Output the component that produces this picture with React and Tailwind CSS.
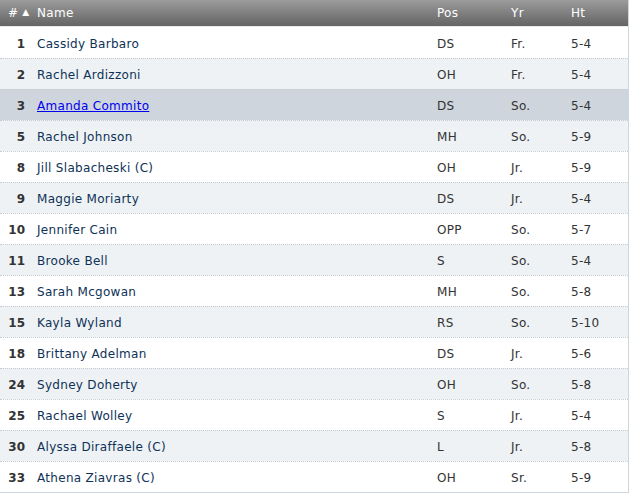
import React from "react";

const players = [
  ["1", "Cassidy Barbaro", "DS", "Fr.", "5-4"],
  ["2", "Rachel Ardizzoni", "OH", "Fr.", "5-4"],
  ["3", "Amanda Commito", "DS", "So.", "5-4"],
  ["5", "Rachel Johnson", "MH", "So.", "5-9"],
  ["8", "Jill Slabacheski (C)", "OH", "Jr.", "5-9"],
  ["9", "Maggie Moriarty", "DS", "Jr.", "5-4"],
  ["10", "Jennifer Cain", "OPP", "So.", "5-7"],
  ["11", "Brooke Bell", "S", "So.", "5-4"],
  ["13", "Sarah Mcgowan", "MH", "So.", "5-8"],
  ["15", "Kayla Wyland", "RS", "So.", "5-10"],
  ["18", "Brittany Adelman", "DS", "Jr.", "5-6"],
  ["24", "Sydney Doherty", "OH", "So.", "5-8"],
  ["25", "Rachael Wolley", "S", "Jr.", "5-4"],
  ["30", "Alyssa Diraffaele (C)", "L", "Jr.", "5-8"],
  ["33", "Athena Ziavras (C)", "OH", "Sr.", "5-9"],
];

export default function App() {
  return (
    <div className="w-[641px] h-[495px] bg-white font-['DejaVu_Sans',sans-serif] text-[12px] tracking-[0.3px]">
      <div className="w-[629px] border-r border-b border-[#cdd5dd]">
        <div className="flex h-[27px] items-center bg-gradient-to-b from-[#9c9c9c] to-[#646464] text-white border-b border-[#e8ecef]">
          <div className="w-[37px] flex items-center pl-[8px] gap-[4px]">
            <span>#</span>
            <span className="text-[9px]">▲</span>
          </div>
          <div className="w-[400px]">Name</div>
          <div className="w-[74px]">Pos</div>
          <div className="w-[60px]">Yr</div>
          <div>Ht</div>
        </div>
        {players.map((p, i) => {
          const active = i === 2;
          const bg = active ? "bg-[#ced5dc]" : i % 2 === 1 ? "bg-[#eef2f5]" : "bg-white";
          return (
            <div
              key={p[0]}
              className={`flex h-[31px] items-center pt-[2px] ${bg} ${i > 0 ? "border-t border-dotted border-[#c5ccd3]" : ""}`}
            >
              <div className="w-[26px] pr-[1px] text-right font-bold tracking-normal text-[#333]">{p[0]}</div>
              <div className="w-[411px] pl-[11px]">
                <span className={active ? "text-[#0000ee] underline" : "text-[#0e3257]"}>{p[1]}</span>
              </div>
              <div className="w-[74px] text-[#333]">{p[2]}</div>
              <div className="w-[60px] text-[#333]">{p[3]}</div>
              <div className="text-[#333]">{p[4]}</div>
            </div>
          );
        })}
      </div>
    </div>
  );
}
